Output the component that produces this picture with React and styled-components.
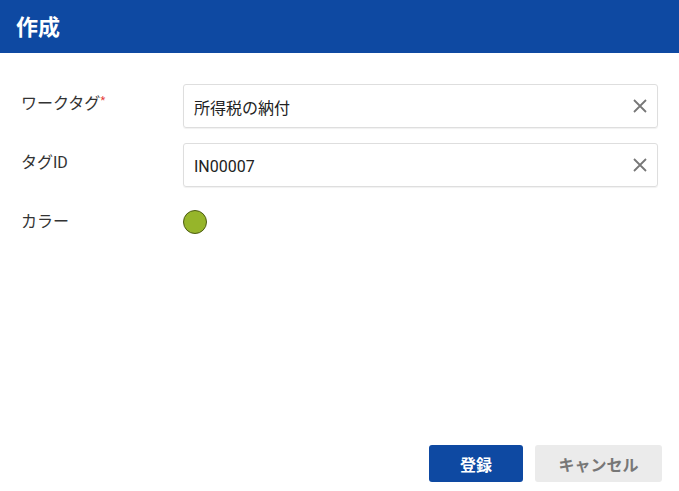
import React from 'react'
import styled, { createGlobalStyle } from 'styled-components'

const GlobalStyle = createGlobalStyle`
  html, body { margin: 0; padding: 0; background: #fff; }
  body { font-family: "Roboto", "Noto Sans CJK JP", sans-serif; color: #333; }
  #root { height: 491px; }
`;

function ClearIcon() {
    return (
        <svg width="16" height="16" viewBox="0 0 16 16">
            <path d="M2 2 L14 14 M14 2 L2 14" stroke="#777" strokeWidth="1.8" fill="none" />
        </svg>
    )
}

function App(){
    return(
        <Dialog>
            <GlobalStyle />
            <Header>作成</Header>
            <Body>
                <Row>
                    <Label>ワークタグ<Required>*</Required></Label>
                    <Field>
                        <Value>所得税の納付</Value>
                        <ClearButton><ClearIcon /></ClearButton>
                    </Field>
                </Row>
                <Row>
                    <Label>タグID</Label>
                    <Field>
                        <Value>IN00007</Value>
                        <ClearButton><ClearIcon /></ClearButton>
                    </Field>
                </Row>
                <ColorRow>
                    <Label>カラー</Label>
                    <Swatch color="#96b52a" />
                </ColorRow>
            </Body>
            <Footer>
                <Button primary>登録</Button>
                <Button>キャンセル</Button>
            </Footer>
        </Dialog>
    )
}

const Dialog = styled.div`
    height: 100%;
    display: flex;
    flex-direction: column;
`;

const Header = styled.div`
    height: 53px;
    background: #0e49a2;
    color: #fff;
    font-weight: 700;
    font-size: 22px;
    display: flex;
    align-items: center;
    padding: 0 16px;
    padding-bottom: 4px;
    box-sizing: border-box;
    font-family: "Noto Sans CJK JP", sans-serif;
`;

const Body = styled.div`
    flex: 1;
    padding: 31px 21px 0 21px;
    display: flex;
    flex-direction: column;
    gap: 15px;
`;

const Row = styled.div`
    display: flex;
    align-items: flex-start;
`;

const ColorRow = styled.div`
    display: flex;
    align-items: center;
    margin-top: 8px;
`;

const Label = styled.div`
    width: 162px;
    flex-shrink: 0;
    font-size: 16px;
    line-height: 20px;
    padding-top: 10px;
    color: #333;
    ${ColorRow} & { padding-top: 0; }
`;

const Required = styled.sup`
    color: #e53935;
    font-size: 11px;
    vertical-align: top;
    position: relative;
    top: -3px;
`;

const Field = styled.div`
    flex: 1;
    height: 44px;
    box-sizing: border-box;
    border: 1px solid #dedede;
    border-radius: 3px;
    box-shadow: 0 1px 1px rgba(0,0,0,0.06);
    display: flex;
    align-items: center;
    padding: 0 7px 0 10px;
`;

const Value = styled.div`
    flex: 1;
    font-size: 16px;
    color: #222;
    padding-top: 2px;
`;

const ClearButton = styled.div`
    width: 20px;
    height: 20px;
    display: flex;
    align-items: center;
    justify-content: center;
`;

const Swatch = styled.div`
    width: 24px;
    height: 24px;
    border-radius: 50%;
    background: ${p => p.color};
    border: 1px solid #4d5c14;
    box-sizing: border-box;
`;

const Footer = styled.div`
    display: flex;
    justify-content: flex-end;
    gap: 12px;
    padding: 0 17px 9px 0;
`;

const Button = styled.div`
    height: 37px;
    min-width: ${p => p.primary ? '94px' : '127px'};
    box-sizing: border-box;
    border-radius: 3px;
    display: flex;
    align-items: center;
    justify-content: center;
    font-weight: 700;
    font-size: 16px;
    font-family: "Noto Sans CJK JP", sans-serif;
    background: ${p => p.primary ? '#0e49a2' : '#ebebeb'};
    color: ${p => p.primary ? '#fff' : '#777'};
`;

export default App
